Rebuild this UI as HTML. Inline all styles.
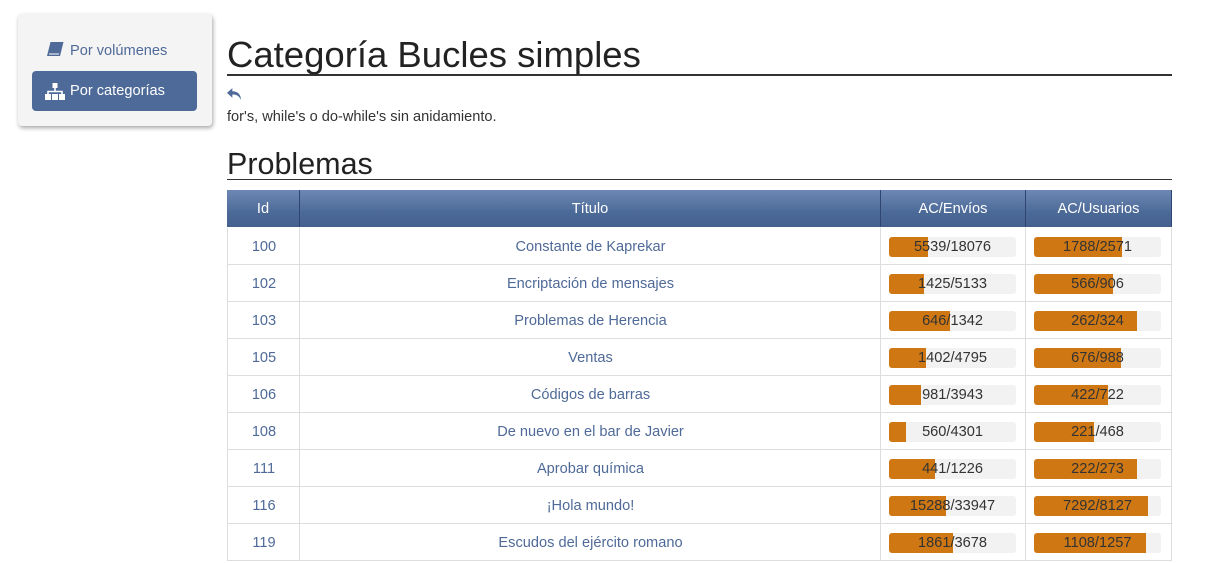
<!DOCTYPE html>
<html><head><meta charset="utf-8"><style>
body{margin:0;background:#fff;font-family:"Liberation Sans",sans-serif;color:#333;width:1218px;height:547px;overflow:hidden;position:relative}
.side{position:absolute;left:18px;top:14px;width:194px;height:112px;background:#f4f4f4;border-radius:4px;box-shadow:1px 2px 4px rgba(0,0,0,.35)}
.l1{position:absolute;left:46px;top:41px;font-size:14.6px;color:#4f6a98}
.l2{position:absolute;left:32px;top:71px;width:165px;height:40px;background:#4d6a98;border-radius:4px;color:#fff;font-size:14.6px}
.l2 span{position:absolute;left:38px;top:12px}
h1{position:absolute;left:227px;top:33px;margin:0;font-weight:normal;font-size:36.5px;line-height:44px;color:#222;width:945px;border-bottom:2px solid #333;height:41px}
.back{position:absolute;left:227px;top:88px}
.desc{position:absolute;left:227px;top:109px;font-size:14.6px;color:#333}
h2{position:absolute;left:227px;top:147px;margin:0;font-weight:normal;font-size:30.5px;line-height:34px;color:#222;width:945px;border-bottom:1px solid #333;height:32px}
.hd{position:absolute;top:190px;height:37px;background:linear-gradient(#6e88b5,#4c6a98 60%,#44608e);color:#fff;font-size:14.6px;text-align:center;line-height:39px;border-right:1px solid #2e4670;box-sizing:border-box}
.row{position:absolute;left:227px;width:945px;height:37px;border-bottom:1px solid #ddd;box-sizing:border-box}
.c{position:absolute;top:0;height:36px;line-height:39px;text-align:center;font-size:14.6px;color:#4f6a98;border-left:1px solid #ddd;box-sizing:border-box}
.bar{position:absolute;top:9px;height:20px;width:127px;background:#f2f2f2;border-radius:3px;overflow:hidden;font-size:14.6px;line-height:21px;text-align:center;color:#333}
.bar i{position:absolute;left:0;top:0;bottom:0;background:#cf7813}
.bar b{position:relative;font-weight:normal}
</style></head><body>
<div class="side">
</div>
<div class="l1"><svg width="18" height="16" viewBox="0 0 18 16" style="vertical-align:-2px;margin-right:6px"><path d="M4.5 1h13l-3.5 14H1z" fill="#4f6a98"/><path d="M3 13h10" stroke="#fff" stroke-width="1"/></svg>Por volúmenes</div>
<div class="l2"><svg width="20" height="17" viewBox="0 0 20 17" style="position:absolute;left:13px;top:12px"><rect x="7.5" y="0" width="5" height="5" fill="#fff"/><path d="M10 5v4M3 12V8.5h14V12" stroke="#fff" fill="none" stroke-width="1.6"/><rect x="0" y="11" width="6" height="6" fill="#fff"/><rect x="7" y="11" width="6" height="6" fill="#fff"/><rect x="14" y="11" width="6" height="6" fill="#fff"/></svg><span>Por categorías</span></div>
<h1>Categoría Bucles simples</h1>
<svg class="back" width="15" height="13" viewBox="0 0 14 12"><path d="M5 0L0 4.5 5 9V6c4 0 6 1 8 5 0-5-3-8-8-8z" fill="#4f6a98"/></svg>
<div class="desc">for's, while's o do-while's sin anidamiento.</div>
<h2>Problemas</h2>
<div class="hd" style="left:227px;width:73px">Id</div>
<div class="hd" style="left:300px;width:581px">Título</div>
<div class="hd" style="left:881px;width:145px">AC/Envíos</div>
<div class="hd" style="left:1026px;width:146px">AC/Usuarios</div>
<div id="rows"></div>
<script>
var d=[["100","Constante de Kaprekar","5539/18076",39,"1788/2571",88],["102","Encriptación de mensajes","1425/5133",35,"566/906",79],["103","Problemas de Herencia","646/1342",61,"262/324",103],["105","Ventas","1402/4795",37,"676/988",87],["106","Códigos de barras","981/3943",32,"422/722",74],["108","De nuevo en el bar de Javier","560/4301",17,"221/468",60],["111","Aprobar química","441/1226",46,"222/273",103],["116","¡Hola mundo!","15288/33947",57,"7292/8127",114],["119","Escudos del ejército romano","1861/3678",64,"1108/1257",112]];
var h="";d.forEach(function(r,i){var t=228+i*37;
h+='<div class="row" style="top:'+t+'px"><div class="c" style="left:0;width:73px">'+r[0]+'</div><div class="c" style="left:72px;width:582px">'+r[1]+'</div><div class="c" style="left:653px;width:146px"></div><div class="c" style="left:798px;width:147px;border-right:1px solid #ddd"></div><div class="bar" style="left:662px"><i style="width:'+r[3]+'px"></i><b>'+r[2]+'</b></div><div class="bar" style="left:807px"><i style="width:'+r[5]+'px"></i><b>'+r[4]+'</b></div></div>';});
document.getElementById("rows").innerHTML=h;
</script>
</body></html>
